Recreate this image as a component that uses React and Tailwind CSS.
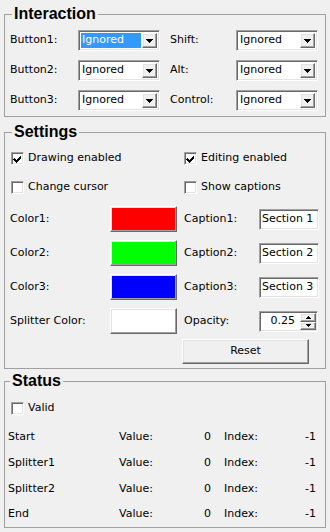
const sunken =
  "border border-t-[#a0a0a0] border-l-[#a0a0a0] border-b-white border-r-white shadow-[inset_1px_1px_0_#696969,inset_-1px_-1px_0_#e3e3e3]";
const raised =
  "border border-t-white border-l-white border-b-[#696969] border-r-[#696969] shadow-[inset_-1px_-1px_0_#a0a0a0,inset_1px_1px_0_#e3e3e3]";

function DownArrow() {
  return (
    <svg width="7" height="4" viewBox="0 0 7 4" shapeRendering="crispEdges">
      <rect x="0" y="0" width="7" height="1" fill="#000" />
      <rect x="1" y="1" width="5" height="1" fill="#000" />
      <rect x="2" y="2" width="3" height="1" fill="#000" />
      <rect x="3" y="3" width="1" height="1" fill="#000" />
    </svg>
  );
}

function SmallArrow({ up }) {
  return (
    <svg width="5" height="3" viewBox="0 0 5 3" shapeRendering="crispEdges">
      {up ? (
        <>
          <rect x="2" y="0" width="1" height="1" fill="#000" />
          <rect x="1" y="1" width="3" height="1" fill="#000" />
          <rect x="0" y="2" width="5" height="1" fill="#000" />
        </>
      ) : (
        <>
          <rect x="0" y="0" width="5" height="1" fill="#000" />
          <rect x="1" y="1" width="3" height="1" fill="#000" />
          <rect x="2" y="2" width="1" height="1" fill="#000" />
        </>
      )}
    </svg>
  );
}

function Combo({ selected }) {
  return (
    <div className={`flex h-[21px] w-[82px] bg-white p-[2px] ${sunken}`}>
      <div className="flex flex-1 pr-[1px]">
        {selected ? (
          <span className="flex h-full w-full items-center bg-[#3399ff] pl-[1px] text-white">Ignored</span>
        ) : (
          <span className="flex h-full items-center pl-[1px]">Ignored</span>
        )}
      </div>
      <div className={`flex h-[15px] w-[15px] items-center justify-center bg-[#f0f0f0] ${raised}`}>
        <DownArrow />
      </div>
    </div>
  );
}

function Checkbox({ checked, label }) {
  return (
    <div className="flex h-[13px] items-center">
      <div className={`h-[13px] w-[13px] shrink-0 bg-white ${sunken}`}>
        {checked && (
          <svg width="11" height="11" viewBox="0 0 11 11" shapeRendering="crispEdges">
            <path d="M2 4h1v1h1v1h1v-1h1v-1h1v-1h1v-1h1v3h-1v1h-1v1h-1v1h-1v1h-1v-1h-1v-1h-1v-1h-1z" fill="#000" transform="translate(0 0.5)" />
          </svg>
        )}
      </div>
      <span className="ml-[4px] whitespace-nowrap">{label}</span>
    </div>
  );
}

function ColorButton({ color }) {
  return (
    <div className={`h-[26px] w-[67px] p-[1px] ${raised}`}>
      <div className="h-full w-full" style={{ background: color }} />
    </div>
  );
}

function TextBox({ value }) {
  return (
    <div className={`flex h-[21px] w-[60px] items-center bg-white pl-[2px] whitespace-nowrap ${sunken}`}>
      {value}
    </div>
  );
}

function Spin({ value }) {
  return (
    <div className={`flex h-[21px] w-[59px] bg-white p-[1px] ${sunken}`}>
      <div className="flex flex-1 items-center justify-end pr-[5px]">{value}</div>
      <div className="flex w-[16px] flex-col">
        <div className={`flex h-[9px] items-center justify-center bg-[#f0f0f0] ${raised}`}>
          <SmallArrow up />
        </div>
        <div className={`flex h-[8px] items-center justify-center bg-[#f0f0f0] ${raised}`}>
          <SmallArrow />
        </div>
      </div>
    </div>
  );
}

function Legend({ children }) {
  return (
    <legend className="ml-[2px] px-[2px] font-['Liberation_Sans',sans-serif] text-[16px] font-bold leading-[18px]">
      {children}
    </legend>
  );
}

const colorRows = [
  { label: "Color1:", color: "#ff0000", right: "Caption1:", value: "Section 1" },
  { label: "Color2:", color: "#00ff00", right: "Caption2:", value: "Section 2" },
  { label: "Color3:", color: "#0000ff", right: "Caption3:", value: "Section 3" },
];

const statusRows = ["Start", "Splitter1", "Splitter2", "End"];

export default function App() {
  return (
    <div className="h-[532px] w-[330px] overflow-hidden bg-[#f0f0f0] px-[4px] pt-[5px] font-['DejaVu_Sans',sans-serif] text-[11px] text-black">
      {/* Interaction */}
      <fieldset className="border border-[#a0a0a0] pr-[5px] pb-[5px] pl-[5px] pt-[7px]">
        <Legend>Interaction</Legend>
        <div className="grid grid-cols-[68px_82px_76px_82px] items-center gap-y-[9px]">
          <span>Button1:</span>
          <Combo selected />
          <span className="pl-[10px]">Shift:</span>
          <Combo />
          <span>Button2:</span>
          <Combo />
          <span className="pl-[10px]">Alt:</span>
          <Combo />
          <span>Button3:</span>
          <Combo />
          <span className="pl-[10px]">Control:</span>
          <Combo />
        </div>
      </fieldset>

      {/* Settings */}
      <fieldset className="mt-[6px] border border-[#a0a0a0] pr-[5px] pb-[4px] pl-[5px] pt-[11px]">
        <Legend>Settings</Legend>
        <div className="flex">
          <div className="w-[174px] pl-[1px]">
            <Checkbox checked label="Drawing enabled" />
          </div>
          <Checkbox checked label="Editing enabled" />
        </div>
        <div className="mt-[16px] flex">
          <div className="w-[174px] pl-[1px]">
            <Checkbox label="Change cursor" />
          </div>
          <Checkbox label="Show captions" />
        </div>
        <div className="mt-[12px] flex flex-col gap-[8px]">
          {colorRows.map((r) => (
            <div key={r.label} className="flex h-[26px] items-center">
              <span className="w-[100px]">{r.label}</span>
              <ColorButton color={r.color} />
              <span className="ml-[7px] w-[75px]">{r.right}</span>
              <TextBox value={r.value} />
            </div>
          ))}
          <div className="flex h-[26px] items-center">
            <span className="w-[100px]">Splitter Color:</span>
            <ColorButton color="#ffffff" />
            <span className="ml-[7px] w-[75px]">Opacity:</span>
            <Spin value="0.25" />
          </div>
        </div>
        <div className="mt-[5px] pl-[172px]">
          <div className={`flex h-[25px] w-[127px] items-center justify-center bg-[#f0f0f0] ${raised}`}>
            Reset
          </div>
        </div>
      </fieldset>

      {/* Status */}
      <fieldset className="mt-[3px] border border-[#a0a0a0] pr-[5px] pb-0 pl-[3px] pt-[5px]">
        <Legend>Status</Legend>
        <div className="flex h-[26px] items-center pl-[3px]">
          <Checkbox label="Valid" />
        </div>
        <div className="mt-[3px] flex flex-col">
          {statusRows.map((name, i) => (
            <div key={name} className={`flex items-center ${i === 3 ? "h-[25px]" : "h-[26px]"}`}>
              <span className="w-[111px]">{name}</span>
              <div className="flex w-[92px] justify-between">
                <span>Value:</span>
                <span>0</span>
              </div>
              <div className="ml-[13px] flex w-[92px] justify-between">
                <span>Index:</span>
                <span>-1</span>
              </div>
            </div>
          ))}
        </div>
      </fieldset>
    </div>
  );
}
